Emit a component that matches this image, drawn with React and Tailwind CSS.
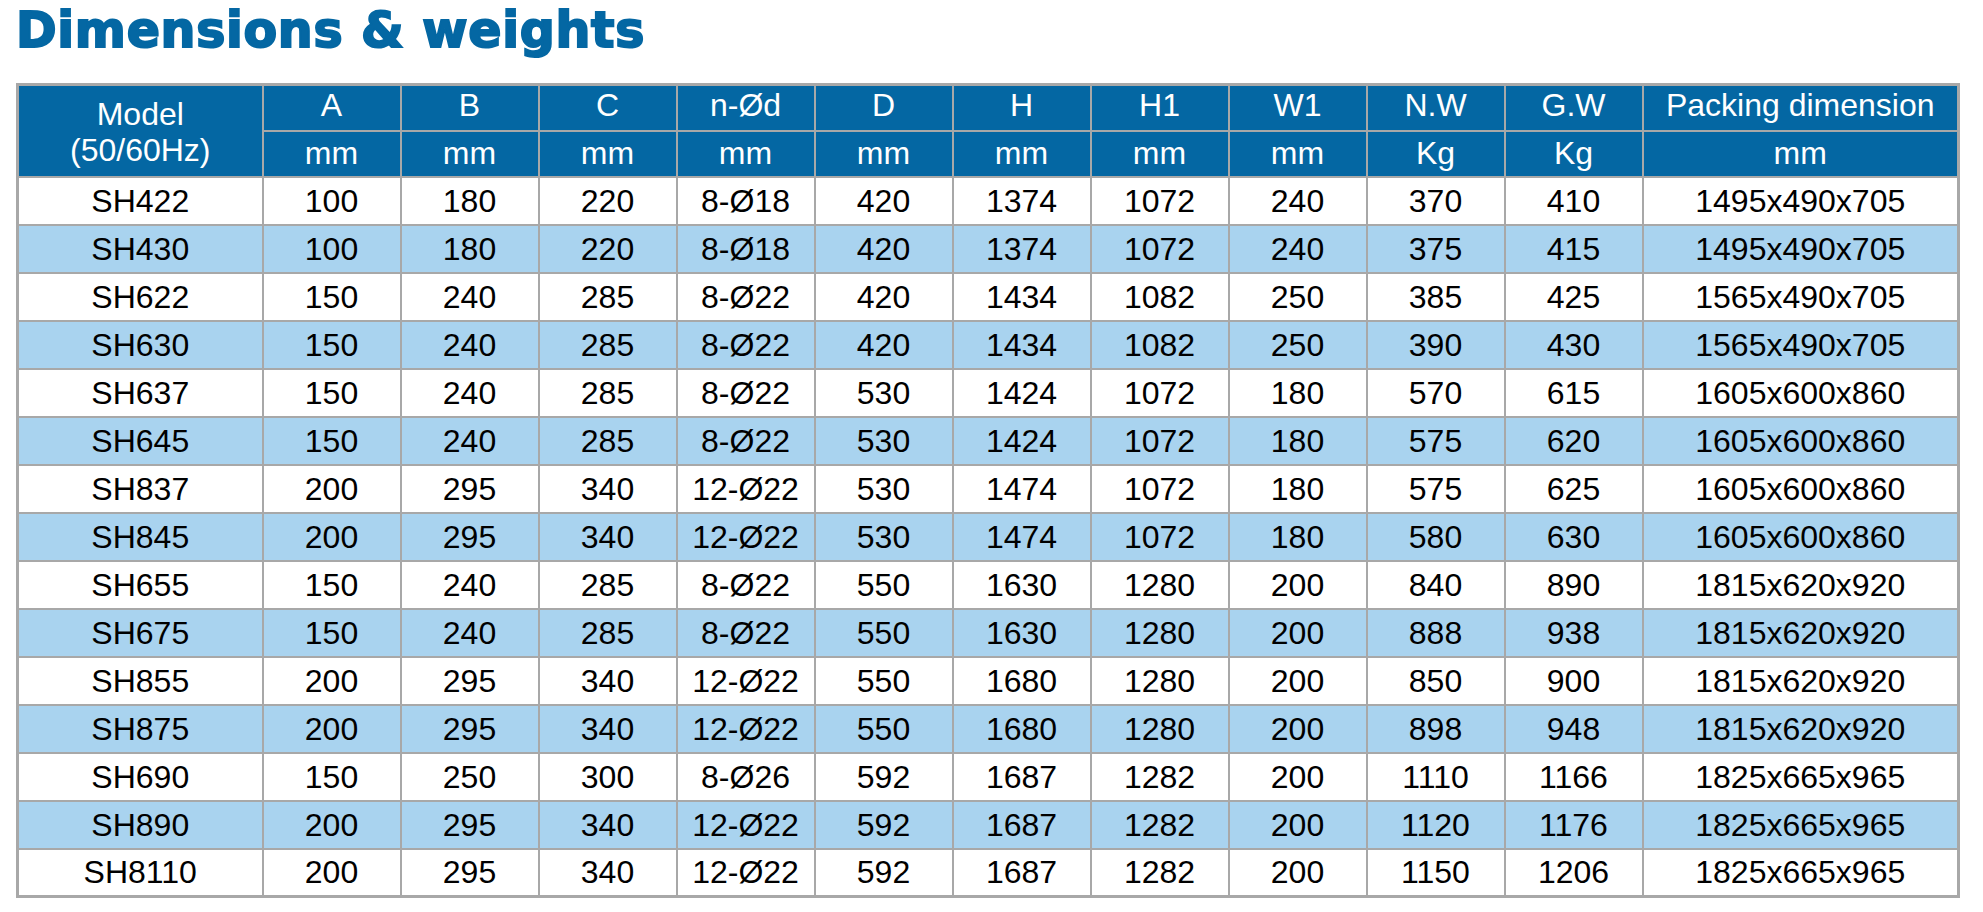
const columns = [
  { top: 'A', unit: 'mm' },
  { top: 'B', unit: 'mm' },
  { top: 'C', unit: 'mm' },
  { top: 'n-Ød', unit: 'mm' },
  { top: 'D', unit: 'mm' },
  { top: 'H', unit: 'mm' },
  { top: 'H1', unit: 'mm' },
  { top: 'W1', unit: 'mm' },
  { top: 'N.W', unit: 'Kg' },
  { top: 'G.W', unit: 'Kg' },
  { top: 'Packing dimension', unit: 'mm' },
]

const rows = [
  ['SH422', '100', '180', '220', '8-Ø18', '420', '1374', '1072', '240', '370', '410', '1495x490x705'],
  ['SH430', '100', '180', '220', '8-Ø18', '420', '1374', '1072', '240', '375', '415', '1495x490x705'],
  ['SH622', '150', '240', '285', '8-Ø22', '420', '1434', '1082', '250', '385', '425', '1565x490x705'],
  ['SH630', '150', '240', '285', '8-Ø22', '420', '1434', '1082', '250', '390', '430', '1565x490x705'],
  ['SH637', '150', '240', '285', '8-Ø22', '530', '1424', '1072', '180', '570', '615', '1605x600x860'],
  ['SH645', '150', '240', '285', '8-Ø22', '530', '1424', '1072', '180', '575', '620', '1605x600x860'],
  ['SH837', '200', '295', '340', '12-Ø22', '530', '1474', '1072', '180', '575', '625', '1605x600x860'],
  ['SH845', '200', '295', '340', '12-Ø22', '530', '1474', '1072', '180', '580', '630', '1605x600x860'],
  ['SH655', '150', '240', '285', '8-Ø22', '550', '1630', '1280', '200', '840', '890', '1815x620x920'],
  ['SH675', '150', '240', '285', '8-Ø22', '550', '1630', '1280', '200', '888', '938', '1815x620x920'],
  ['SH855', '200', '295', '340', '12-Ø22', '550', '1680', '1280', '200', '850', '900', '1815x620x920'],
  ['SH875', '200', '295', '340', '12-Ø22', '550', '1680', '1280', '200', '898', '948', '1815x620x920'],
  ['SH690', '150', '250', '300', '8-Ø26', '592', '1687', '1282', '200', '1110', '1166', '1825x665x965'],
  ['SH890', '200', '295', '340', '12-Ø22', '592', '1687', '1282', '200', '1120', '1176', '1825x665x965'],
  ['SH8110', '200', '295', '340', '12-Ø22', '592', '1687', '1282', '200', '1150', '1206', '1825x665x965'],
]

export default function App() {
  return (
    <div className="min-h-screen bg-white pt-[6px] pl-[16px] font-['Liberation_Sans',Arial,sans-serif]">
      {/* Title */}
      <h1 className="text-[49px] leading-[49px] font-bold tracking-[0.7px] text-[#0467a3] font-['DejaVu_Sans',sans-serif] [-webkit-text-stroke:2px_#0467a3]">
        Dimensions &amp; weights
      </h1>

      {/* Spec table */}
      <table className="mt-[28px] w-[1941px] table-fixed border-collapse border-[3px] border-[#a8a8a8] text-[32px] leading-none">
        <colgroup>
          <col className="w-[245px]" />
          {columns.slice(0, 10).map((c) => (
            <col key={c.top} className="w-[138px]" />
          ))}
          <col className="w-[316px]" />
        </colgroup>
        <thead className="bg-[#0467a3] text-white">
          <tr className="h-[46px]">
            <th rowSpan={2} className="border-2 border-[#a8a8a8] font-normal align-middle">
              <div className="leading-[36px] pt-[2px]">Model</div>
              <div className="leading-[36px]">(50/60Hz)</div>
            </th>
            {columns.map((c) => (
              <th key={c.top} className="border-2 border-[#a8a8a8] font-normal align-middle pb-[6px]">
                {c.top}
              </th>
            ))}
          </tr>
          <tr className="h-[46px]">
            {columns.map((c) => (
              <th key={c.top} className="border-2 border-[#a8a8a8] font-normal align-middle pb-[2px]">
                {c.unit}
              </th>
            ))}
          </tr>
        </thead>
        <tbody className="text-black">
          {rows.map((r, i) => (
            <tr key={r[0]} className={i % 2 === 1 ? 'h-[48px] bg-[#a9d3ef]' : 'h-[48px] bg-white'}>
              {r.map((v, j) => (
                <td key={j} className="border-2 border-[#a8a8a8] text-center align-middle">
                  {v}
                </td>
              ))}
            </tr>
          ))}
        </tbody>
      </table>
    </div>
  )
}
